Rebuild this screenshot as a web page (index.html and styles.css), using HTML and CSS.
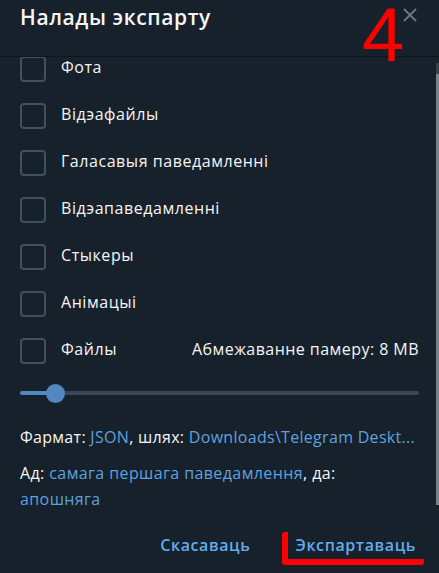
FILE: index.html
```html
<!DOCTYPE html>
<html lang="be">
<head>
<meta charset="utf-8">
<title>Налады экспарту</title>
<link rel="stylesheet" href="styles.css">
</head>
<body>
<div class="dialog">
  <div class="header">
    <div class="title">Налады экспарту</div>
    <svg class="close" width="16" height="16" viewBox="0 0 16 16"><path d="M2 2 L14 14 M14 2 L2 14" stroke="#6c7883" stroke-width="1.8" fill="none"/></svg>
  </div>
  <div class="body">
    <div class="content">
      <div class="row"><span class="box"></span><span class="label">Фота</span></div>
      <div class="row"><span class="box"></span><span class="label">Відэафайлы</span></div>
      <div class="row"><span class="box"></span><span class="label">Галасавыя паведамленні</span></div>
      <div class="row"><span class="box"></span><span class="label">Відэапаведамленні</span></div>
      <div class="row"><span class="box"></span><span class="label">Стыкеры</span></div>
      <div class="row"><span class="box"></span><span class="label">Анімацыі</span></div>
      <div class="row"><span class="box"></span><span class="label">Файлы</span><span class="limit">Абмежаванне памеру: 8 MB</span></div>
      <div class="slider">
        <div class="track"><div class="fill"></div><div class="thumb"></div></div>
      </div>
      <p class="info format">Фармат: <span class="link">JSON</span>, шлях: <span class="link">Downloads\Telegram Deskt...</span></p>
      <p class="info range">Ад: <span class="link">самага першага паведамлення</span>, да: <span class="link">апошняга</span></p>
    </div>
    <div class="scrollbar"><div class="scroll-top"></div><div class="scroll-thumb"></div></div>
  </div>
  <div class="footer">
    <button class="btn">Скасаваць</button>
    <button class="btn">Экспартаваць</button>
  </div>
  <div class="mark-num">4</div>
  <div class="mark-line"></div>
</div>
</body>
</html>
```
FILE: styles.css
```css
* { box-sizing: border-box; }
html, body { margin: 0; padding: 0; background: #17212b; }
body { font-family: "Open Sans", "Noto Sans", sans-serif; color: #f5f5f5; }
.dialog {
  position: relative;
  width: 439px;
  height: 573px;
  display: flex;
  flex-direction: column;
  background: #17212b;
  overflow: hidden;
}
.header {
  height: 57px;
  flex: none;
  display: flex;
  align-items: flex-start;
  justify-content: space-between;
  padding: 0 21px 0 20px;
  border-bottom: 1px solid #0f151c;
}
.title {
  font-size: 21px;
  font-weight: 600;
  line-height: 26px;
  margin-top: 4px;
  letter-spacing: 0.6px;
}
.close { margin-top: 7px; flex: none; }
.body {
  position: relative;
  flex: 1;
  overflow: hidden;
}
.content { margin-top: -12px; }
.row {
  height: 47px;
  display: flex;
  align-items: center;
  padding: 0 20px;
  font-size: 16px;
  letter-spacing: 0.55px;
}
.box {
  width: 26px;
  height: 26px;
  border: 2px solid #3f5062;
  border-radius: 4px;
  flex: none;
}
.label {
  margin-left: 15px;
  flex: 1;
  margin-top: -3px;
}
.limit { margin-top: -3px; letter-spacing: 0.45px; }
.slider {
  height: 38px;
  padding: 0 20px;
  display: flex;
  align-items: center;
}
.track {
  position: relative;
  width: 100%;
  height: 4px;
  border-radius: 2px;
  background: #3a4653;
}
.fill {
  width: 35px;
  height: 4px;
  border-radius: 2px;
  background: #5288c1;
}
.thumb {
  position: absolute;
  left: 26px;
  top: -7.5px;
  width: 19px;
  height: 19px;
  border-radius: 50%;
  background: #5288c1;
}
.info {
  margin: 0;
  padding: 0 20px;
  font-size: 16px;
  letter-spacing: 0.4px;
  line-height: 26px;
}
.format { margin-top: 12px; white-space: nowrap; overflow: hidden; letter-spacing: 0.3px; }
.range { margin-top: 10px; padding-right: 30px; }
.link { color: #5ea1de; }
.scrollbar {
  position: absolute;
  right: 0;
  top: 6px;
  width: 3px;
  display: flex;
  flex-direction: column;
}
.scroll-top { height: 11px; background: #3a4149; }
.scroll-thumb { height: 431px; background: #7a838c; }
.footer {
  height: 53px;
  flex: none;
  display: flex;
  justify-content: flex-end;
  align-items: flex-start;
  gap: 21px;
  padding: 7px 11px 0 0;
}
.btn {
  height: 36px;
  padding: 0 12px;
  border: none;
  background: transparent;
  font-family: "Open Sans", "Noto Sans", sans-serif;
  font-size: 16px;
  letter-spacing: 0.6px;
  font-weight: 600;
  color: #62acee;
}
.mark-num {
  position: absolute;
  left: 362px;
  top: 2px;
  font-family: "Liberation Sans", Arial, sans-serif;
  font-size: 76px;
  line-height: 66px;
  color: #ff0000;
}
.mark-line {
  position: absolute;
  left: 282px;
  top: 532px;
  width: 142px;
  height: 33px;
  border-left: 6px solid #ff0000;
  border-bottom: 6px solid #ff0000;
  border-radius: 3px;
}
```
